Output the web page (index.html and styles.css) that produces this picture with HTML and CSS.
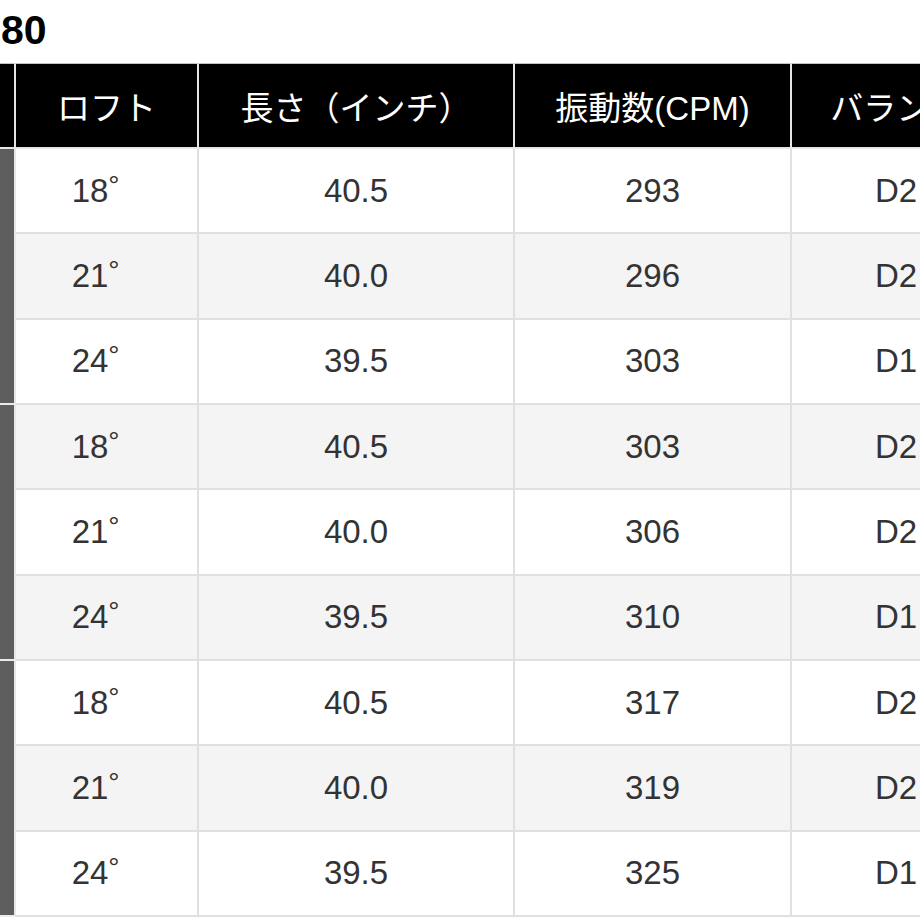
FILE: index.html
```html
<!DOCTYPE html>
<html lang="ja">
<head>
<meta charset="utf-8">
<title>スペック</title>
<link rel="stylesheet" href="styles.css">
</head>
<body>
<div class="page">
  <h2 class="title">80</h2>
  <table class="spec">
    <thead>
      <tr>
        <th class="c0"></th>
        <th class="c1">ロフト</th>
        <th class="c2">長さ（インチ）</th>
        <th class="c3">振動数(CPM)</th>
        <th class="c4">バランス</th>
      </tr>
    </thead>
    <tbody>
      <tr><td class="flex" rowspan="3"></td><td>18<span class="deg">°</span></td><td>40.5</td><td>293</td><td>D2</td></tr>
      <tr><td>21<span class="deg">°</span></td><td>40.0</td><td>296</td><td>D2</td></tr>
      <tr><td>24<span class="deg">°</span></td><td>39.5</td><td>303</td><td>D1</td></tr>
      <tr><td class="flex" rowspan="3"></td><td>18<span class="deg">°</span></td><td>40.5</td><td>303</td><td>D2</td></tr>
      <tr><td>21<span class="deg">°</span></td><td>40.0</td><td>306</td><td>D2</td></tr>
      <tr><td>24<span class="deg">°</span></td><td>39.5</td><td>310</td><td>D1</td></tr>
      <tr><td class="flex" rowspan="3"></td><td>18<span class="deg">°</span></td><td>40.5</td><td>317</td><td>D2</td></tr>
      <tr><td>21<span class="deg">°</span></td><td>40.0</td><td>319</td><td>D2</td></tr>
      <tr><td>24<span class="deg">°</span></td><td>39.5</td><td>325</td><td>D1</td></tr>
    </tbody>
  </table>
</div>
</body>
</html>
```

FILE: styles.css
```css
html, body {
  margin: 0;
  padding: 0;
  background: #fff;
}

.page {
  width: 920px;
  height: 920px;
  overflow: hidden;
  font-family: "Liberation Sans", "Noto Sans CJK JP", sans-serif;
}

.title {
  margin: 6px 0 9px 1px;
  font-size: 41px;
  line-height: 48px;
  font-weight: bold;
  color: #000;
}

.spec {
  table-layout: fixed;
  width: 1002px;
  border-collapse: separate;
  border-spacing: 0;
  font-size: 33px;
}

.spec th,
.spec td {
  padding: 0;
  text-align: center;
  vertical-align: middle;
  font-weight: normal;
  box-sizing: border-box;
}

.spec th {
  height: 86px;
  background: #000;
  color: #fff;
  border-top: 1px solid #c4c4c4;
  border-right: 2px solid #e6e6e6;
  border-bottom: 2px solid #e6e6e6;
}

.spec th.c0 { width: 16px; }
.spec th.c1 { width: 183px; }
.spec th.c2 { width: 316px; }
.spec th.c3 { width: 277px; }
.spec th.c4 { width: 210px; }

.spec td {
  height: 85.33px;
  color: #333;
  background: #fff;
  border-right: 2px solid #e0e0e0;
  border-bottom: 2px solid #e0e0e0;
}

.spec tbody tr:nth-child(even) td {
  background: #f4f4f4;
}

.spec tbody td.flex,
.spec tbody tr:nth-child(even) td.flex {
  background: #5e5e5e;
  border-right: 2px solid #e8e8e8;
  border-bottom: 2px solid #ececec;
}

.deg {
  display: inline-block;
  width: 33px;
  text-align: left;
  font-size: 28px;
  vertical-align: 7px;
  line-height: 1;
}
```
